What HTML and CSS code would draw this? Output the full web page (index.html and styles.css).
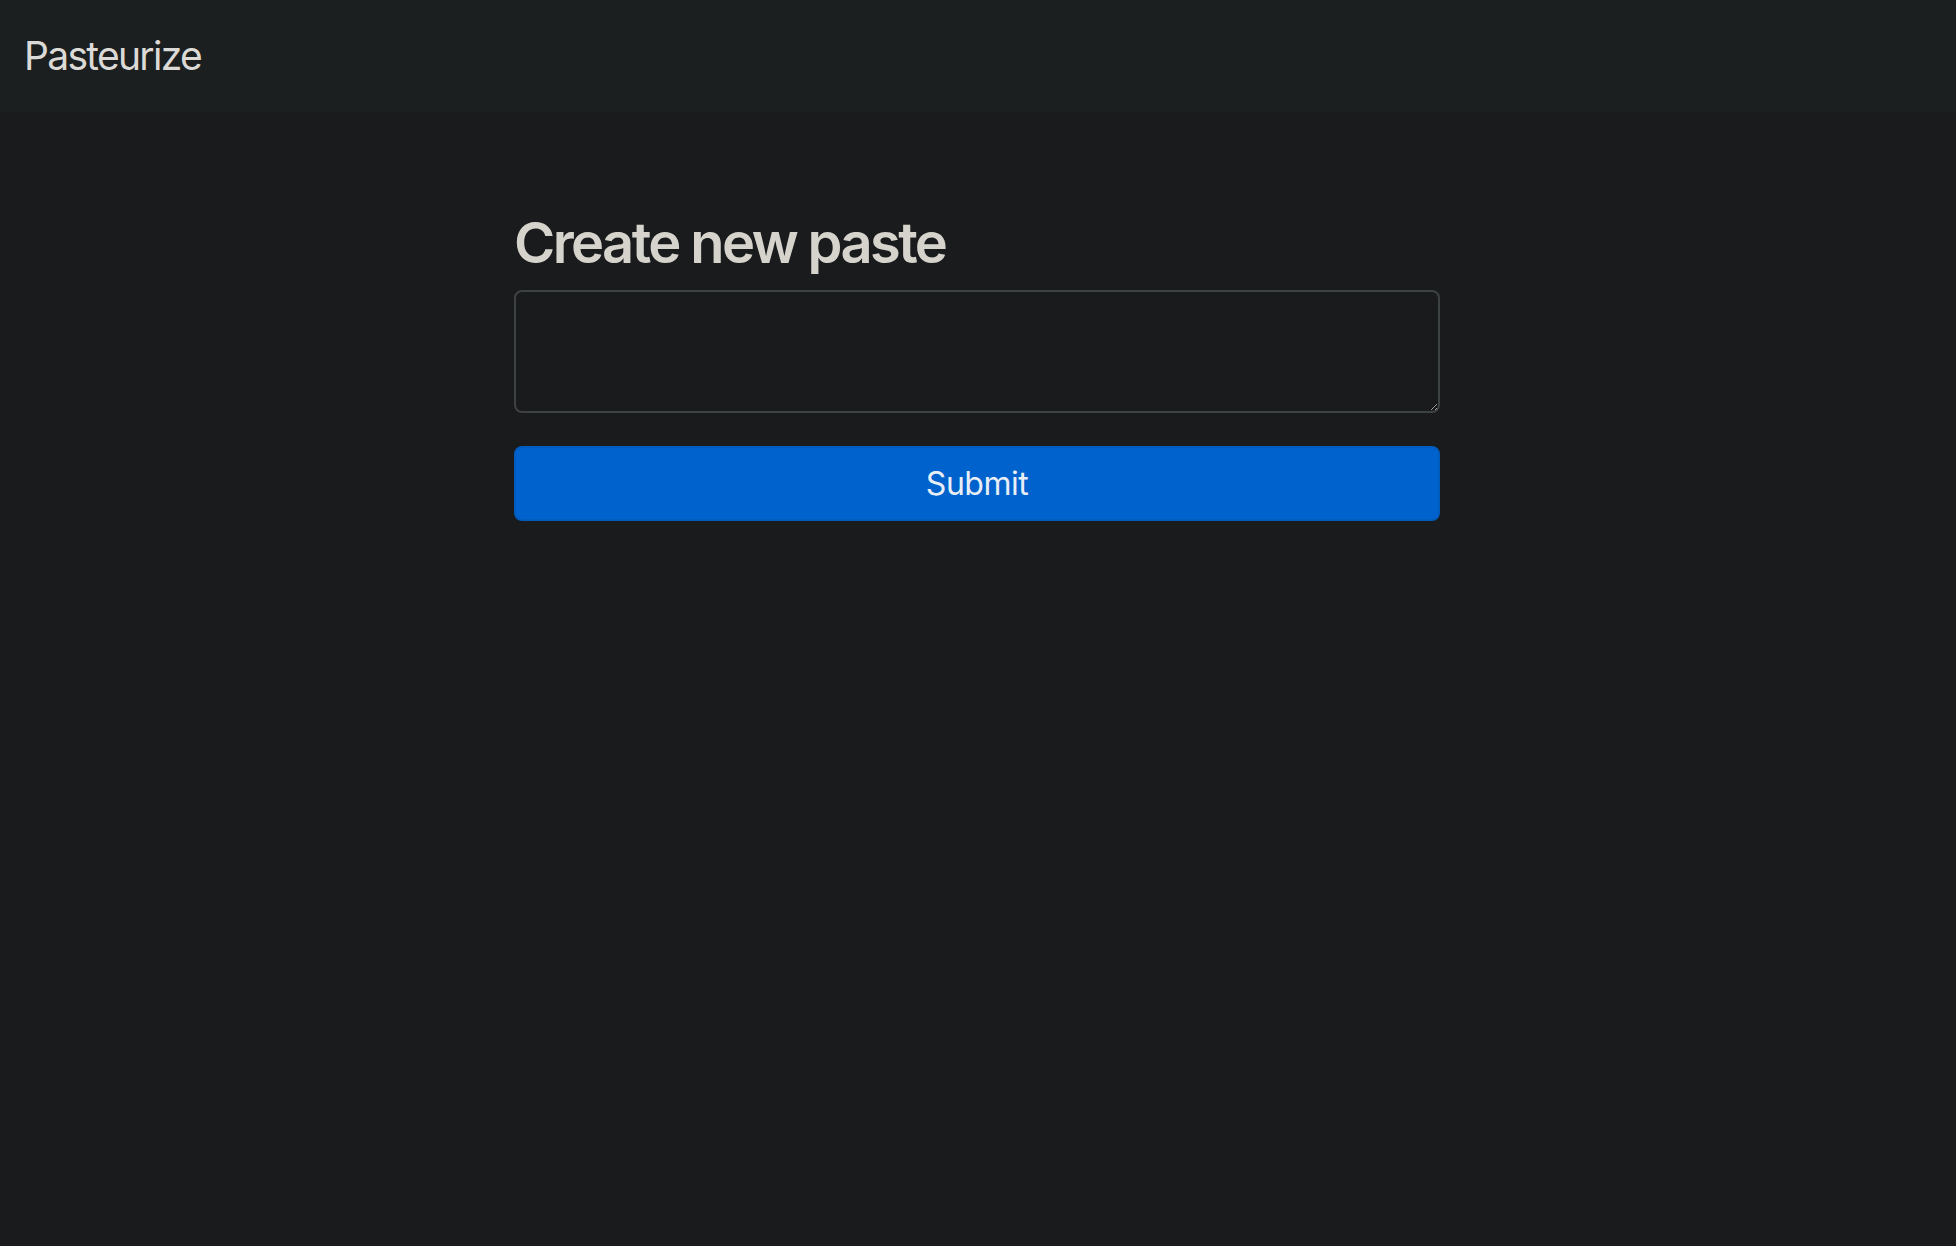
FILE: index.html
```html
<!DOCTYPE html>
<html lang="en">
<head>
<meta charset="utf-8">
<title>Pasteurize</title>
<link rel="stylesheet" href="styles.css">
</head>
<body>
<nav class="navbar">
  <a class="brand" href="#">Pasteurize</a>
</nav>
<main class="container">
  <h1 class="title">Create new paste</h1>
  <form class="paste-form">
    <textarea class="paste-input"></textarea>
    <button type="button" class="btn-submit">Submit</button>
  </form>
</main>
</body>
</html>
```
FILE: styles.css
```css
html, body {
  margin: 0;
  padding: 0;
}
body {
  background: #1a1b1d;
  font-family: Inter, "Noto Sans", sans-serif;
  min-height: 100vh;
}
.navbar {
  height: 112px;
  background: #1c1f20;
  display: flex;
  align-items: center;
  padding: 0 24px;
  box-sizing: border-box;
}
.brand {
  color: #dcdad6;
  font-size: 39px;
  text-decoration: none;
  letter-spacing: -1.7px;
  line-height: 1;
  margin-top: -2px;
}
.container {
  width: 926px;
  margin: 0 auto;
  padding-top: 95px;
  transform: translateX(-1px);
}
.title {
  margin: 0 0 11px 0;
  color: #d6d3cc;
  font-size: 56px;
  font-weight: 600;
  letter-spacing: -2.6px;
  line-height: 72px;
}
.paste-form {
  display: flex;
  flex-direction: column;
  gap: 33px;
}
.paste-input {
  box-sizing: border-box;
  width: 926px;
  height: 123px;
  background: #1a1b1d;
  border: 2px solid #3d4245;
  border-radius: 8px;
  color: #dcdad6;
  resize: vertical;
  display: block;
  margin: 0;
}
.btn-submit {
  box-sizing: border-box;
  width: 926px;
  height: 75px;
  background: #0062cc;
  border: 2px solid #005cbf;
  border-radius: 8px;
  color: #e8eef6;
  font-family: Inter, "Noto Sans", sans-serif;
  font-size: 32px;
  letter-spacing: -0.5px;
  cursor: pointer;
}
```
